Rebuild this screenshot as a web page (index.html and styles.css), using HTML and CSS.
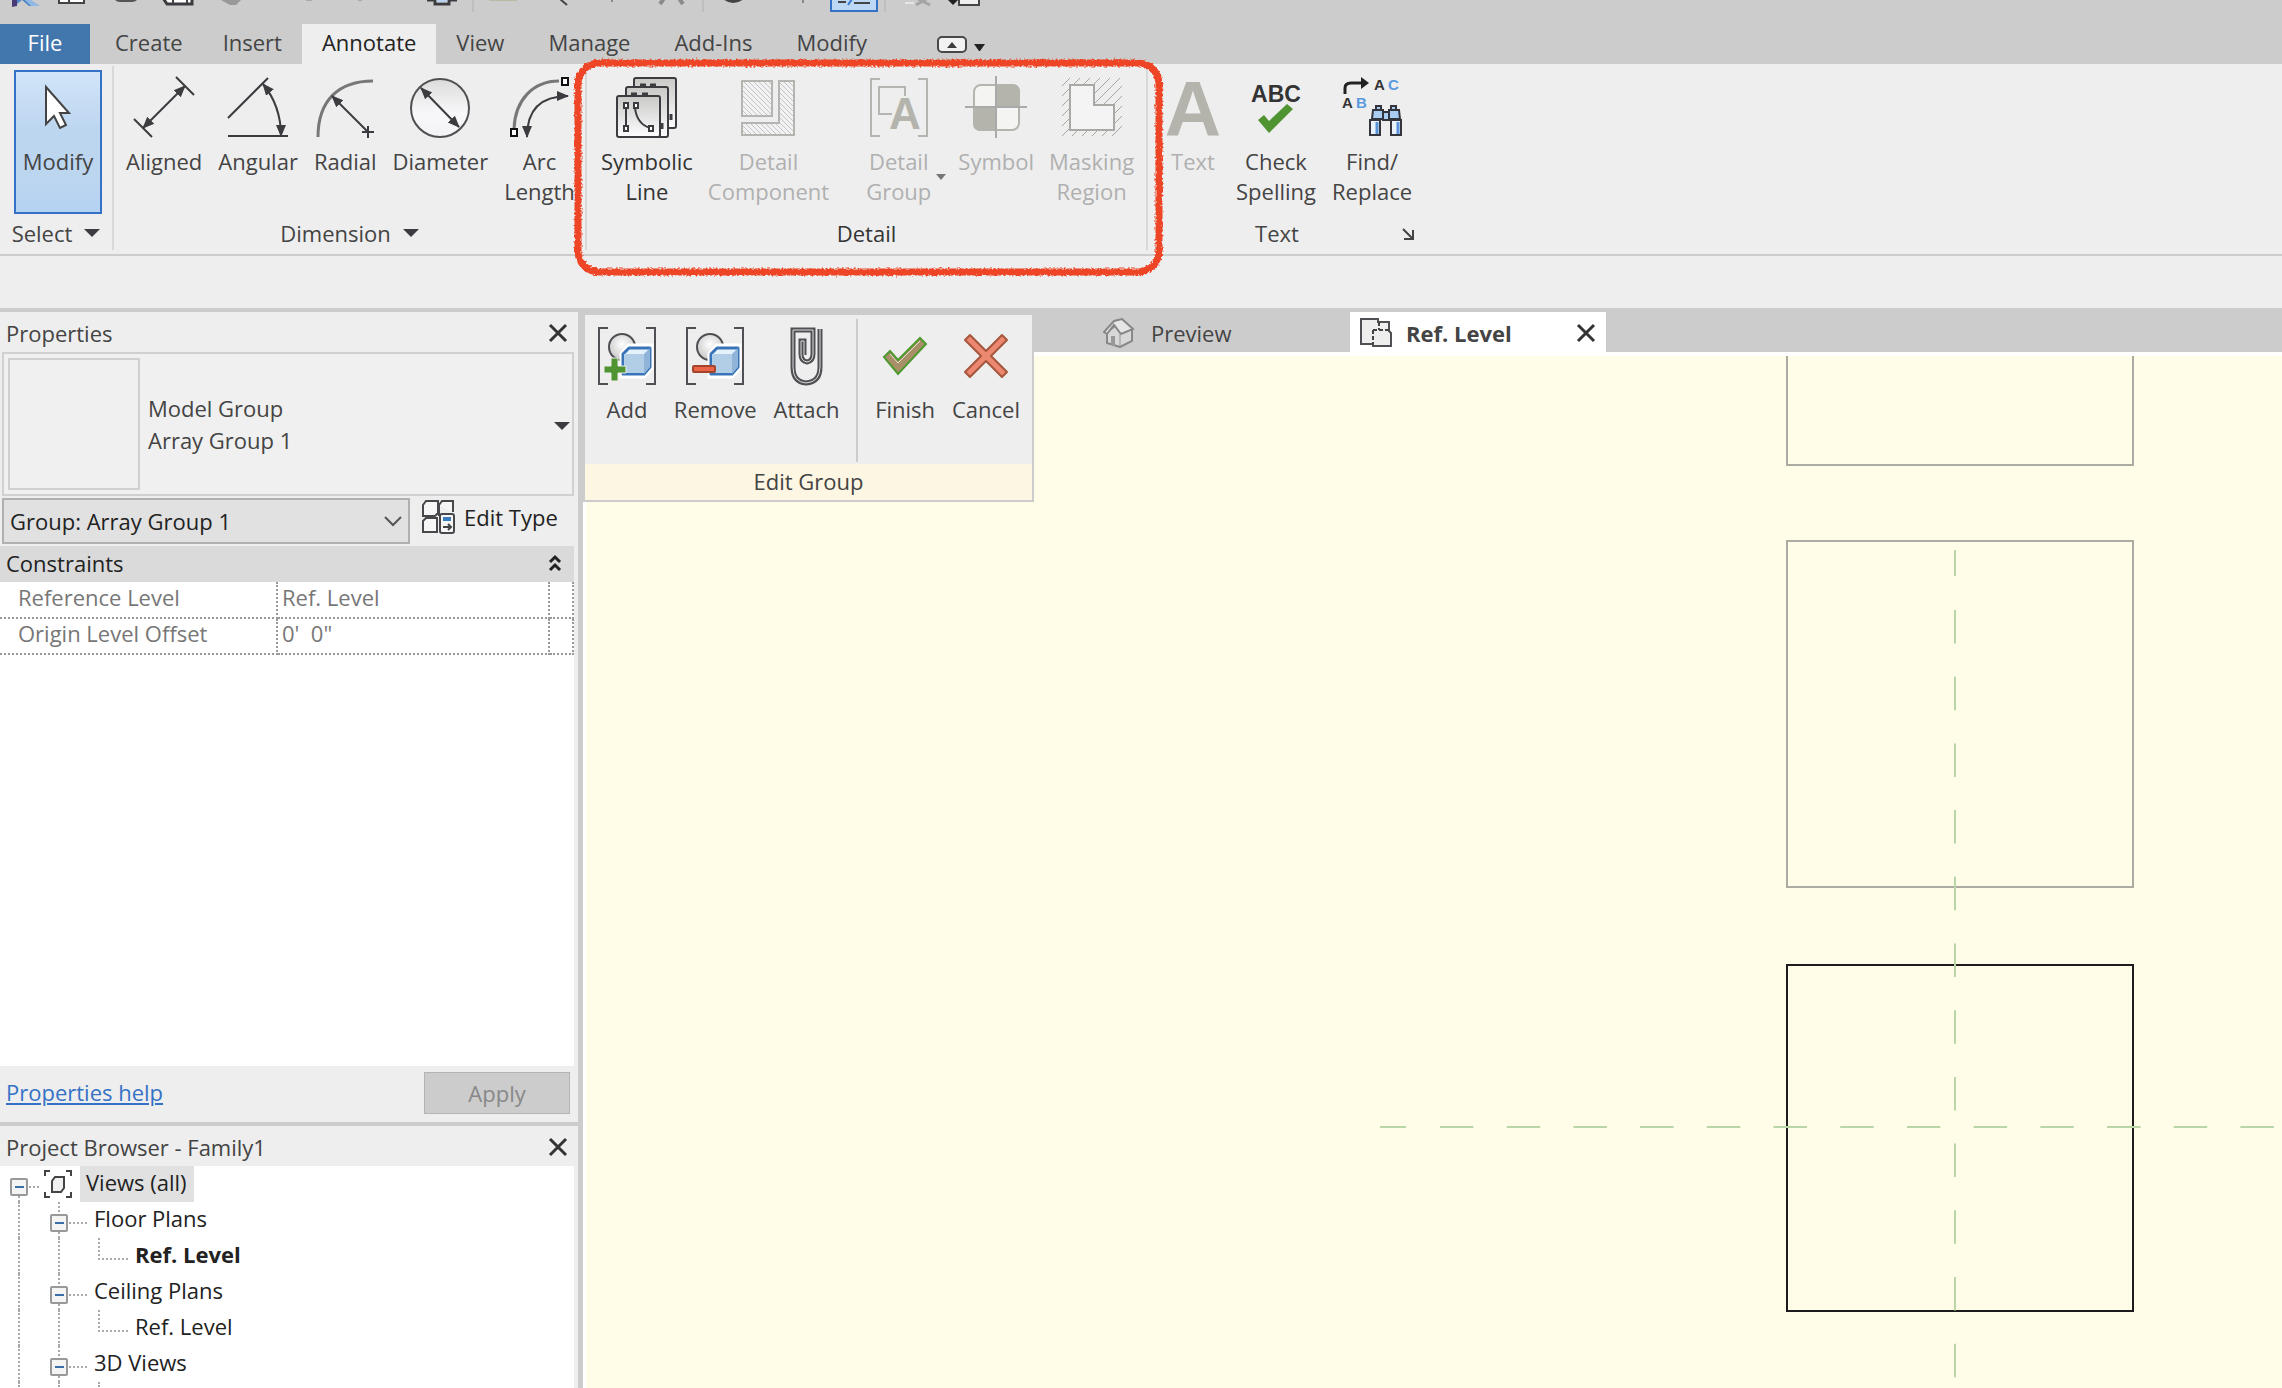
FILE: index.html
```html
<!DOCTYPE html>
<html lang="en">
<head>
<meta charset="utf-8">
<meta name="viewport" content="width=device-width, initial-scale=1">
<title>Family1 - Ref. Level</title>
<link rel="stylesheet" href="styles.css">
</head>
<body>
<svg class="defs" width="0" height="0" aria-hidden="true">
  <defs>
    <linearGradient id="sheet" x1="0" y1="0" x2="0" y2="1"><stop offset="0" stop-color="#c9c9c7"/><stop offset="1" stop-color="#fdfdff"/></linearGradient>
    <linearGradient id="glass" x1="0" y1="0" x2="0" y2="1"><stop offset="0" stop-color="#dcdcdc"/><stop offset=".6" stop-color="#f8f8fa"/><stop offset="1" stop-color="#f3f3f6"/></linearGradient>
    <radialGradient id="ball" cx=".5" cy=".4" r=".6"><stop offset="0" stop-color="#fff"/><stop offset="1" stop-color="#c8c8c8"/></radialGradient>
    <pattern id="hatch" width="5" height="5" patternUnits="userSpaceOnUse"><rect width="5" height="5" fill="#f2f2f2"/><path d="M0 0l5 5" stroke="#c4c4c4" stroke-width="1"/></pattern>
    <marker id="head" viewBox="0 0 12 12" refX="11" refY="6" markerWidth="12" markerHeight="12" markerUnits="userSpaceOnUse" orient="auto-start-reverse"><path d="M0 1l12 5-12 5z" fill="#3c3c40"/></marker>
    <filter id="rough" x="-5%" y="-5%" width="110%" height="110%"><feTurbulence type="fractalNoise" baseFrequency=".5" numOctaves="2" seed="4"/><feDisplacementMap in="SourceGraphic" scale="5" xChannelSelector="R" yChannelSelector="G"/></filter>
    <symbol id="close" viewBox="0 0 20 20"><path d="M2 2l16 16M18 2L2 18" stroke="#333" stroke-width="3" fill="none"/></symbol>
    <symbol id="group" viewBox="0 0 60 60">
      <path d="M11 2H2v56h9M49 2h9v56h-9" fill="none" stroke="#505054" stroke-width="2"/>
      <circle cx="25" cy="21" r="13" fill="url(#ball)" stroke="#505054" stroke-width="2"/>
      <path d="M25 28l7-8h22v22l-7 8H25z" fill="#fff" stroke="#fff" stroke-width="5"/>
      <path d="M26 28l6-6h21v19l-6 7H26z" fill="#e6f2fa" stroke="#3a74b8" stroke-width="3" stroke-linejoin="round"/>
      <path d="M27 28h20v19H27z" fill="#b2cde6"/><path d="M47 28l6-6v19l-6 7z" fill="#8fb4d8"/>
    </symbol>
    <symbol id="minus-box" viewBox="0 0 18 18"><rect x="1" y="1" width="16" height="16" rx="1" fill="#f4f4f4" stroke="#999" stroke-width="2"/><path d="M5 9h9" stroke="#3a6ea8" stroke-width="2"/></symbol>
  </defs>
</svg>

<header class="titlebar" aria-label="Quick access toolbar">
  <svg width="1000" height="24" viewBox="0 0 1000 24" aria-hidden="true">
    <path d="M12 0h5v6l-5 1z" fill="#4a3a78"/><path d="M17 0h12l10 6h-10L22 0l-5 4z" fill="#4f86c6"/><path d="M25 0h6l9 6h-9z" fill="#8fb8e4"/>
    <path d="M59 -4h25v7H59z" fill="#fff" stroke="#444" stroke-width="2"/><path d="M69-2v4" stroke="#444" stroke-width="2"/>
    <path d="M115 0h22q-2 2-5 2h-12q-3 0-5-2z" fill="#555"/>
    <path d="M163 -2l4 6h25v-6z" fill="#fff" stroke="#3c3c40" stroke-width="3"/><path d="M173-1v4M187-1v4" stroke="#444" stroke-width="2"/>
    <path d="M221 0h20l-5 5h-6z" fill="#999"/>
    <path d="M306 0h6M358 0h4" stroke="#888" stroke-width="1"/>
    <path d="M427 0h8v4h14V0h8" fill="#fff" stroke="#3c3c40" stroke-width="3"/><path d="M437 0h10v2h-10z" fill="#b9d2ee"/>
    <path d="M473 0v12M703 0v12M885 0v12" stroke="#b2b2b2" stroke-width="1"/>
    <path d="M489 0h28" stroke="#a5a77c" stroke-width="1"/>
    <path d="M560-1l7 6" stroke="#444" stroke-width="2"/><path d="M612 0v2M803 0v3" stroke="#888" stroke-width="2"/>
    <path d="M660 4l5-7M683 4l-5-7" stroke="#8c8c8c" stroke-width="4"/>
    <path d="M723-3q10 9 21 0" stroke="#444" stroke-width="3" fill="#fff"/>
    <path d="M831-3h46v14h-46z" fill="#bcd8f4" stroke="#3572c6" stroke-width="2"/><path d="M838 2h8M854 3h16" stroke="#444" stroke-width="2"/><path d="M848 5l4-6" stroke="#3a78c8" stroke-width="2"/>
    <path d="M905 3h9" stroke="#e4e4e4" stroke-width="2"/><path d="M916 5l12-7M918-1l12 6" stroke="#a5a5a5" stroke-width="3"/>
    <path d="M948 0h10l-5 5z" fill="#222"/><path d="M959-3h20v8h-20z" fill="#eee" stroke="#444" stroke-width="2"/>
  </svg>
</header>

<nav class="tabs" aria-label="Ribbon tabs">
  <button class="tab file">File</button>
  <button class="tab">Create</button>
  <button class="tab">Insert</button>
  <button class="tab active">Annotate</button>
  <button class="tab">View</button>
  <button class="tab">Manage</button>
  <button class="tab">Add-Ins</button>
  <button class="tab">Modify</button>
  <button class="collapse" aria-label="Minimize ribbon">
    <svg width="48" height="20" viewBox="0 0 48 20"><rect x="1" y="3" width="28" height="15" rx="4" fill="#f2f2f2" stroke="#48484c" stroke-width="2"/><path d="M10 14h10l-5-6z" fill="#3c3c40"/><path d="M37 10h11l-5 7h-1z" fill="#222"/></svg>
  </button>
</nav>

<section class="ribbon" aria-label="Annotate">
  <div class="panel select-panel">
    <div class="tools">
      <button class="tool selected"><svg width="60" height="62" viewBox="0 0 60 62"><path d="M18 11v37l8-8 6 12 6-3-6-12h9z" fill="#fff" stroke="#444" stroke-width="2"/></svg><span>Modify</span></button>
    </div>
    <div class="panel-title">Select <i class="caret"></i></div>
  </div>
  <div class="panel dimension-panel">
    <div class="tools">
      <button class="tool"><svg width="60" height="62" viewBox="0 0 60 62"><g fill="none" stroke="#3c3c40" stroke-width="2"><path d="M42 1l18 18M0 43l18 18"/><path d="M9 52L51 10" marker-start="url(#head)" marker-end="url(#head)"/></g></svg><span>Aligned</span></button>
      <button class="tool"><svg width="60" height="62" viewBox="0 0 60 62"><g fill="none" stroke="#3c3c40" stroke-width="2"><path d="M0 60h60M0 42L40 2"/><path d="M35 8q18 22 18 52" marker-start="url(#head)" marker-end="url(#head)"/></g></svg><span>Angular</span></button>
      <button class="tool"><svg width="60" height="62" viewBox="0 0 60 62"><g fill="none" stroke="#3c3c40" stroke-width="2"><path d="M3 61C3 24 24 5 58 5" stroke="#777" stroke-width="3"/><path d="M53 56L17 20" marker-end="url(#head)"/><path d="M53 50v12M47 56h12"/></g></svg><span>Radial</span></button>
      <button class="tool"><svg width="62" height="62" viewBox="0 0 62 62"><circle cx="31" cy="32" r="29" fill="url(#glass)" stroke="#505054" stroke-width="2"/><path d="M12 12l38 39" stroke="#3c3c40" stroke-width="2" marker-start="url(#head)" marker-end="url(#head)"/></svg><span>Diameter</span></button>
      <button class="tool"><svg width="60" height="62" viewBox="0 0 60 62"><g fill="none" stroke="#3c3c40" stroke-width="2"><path d="M5 53C6 24 24 5 50 5" stroke="#777" stroke-width="3"/><path d="M18 61C18 34 32 20 59 20" marker-start="url(#head)" marker-end="url(#head)"/><path d="M53 2h6v7h-6zM2 53h6v7H2z" fill="#fff" stroke="#111"/></g></svg><span>Arc<br>Length</span></button>
    </div>
    <div class="panel-title">Dimension <i class="caret"></i></div>
  </div>
  <div class="panel detail-panel">
    <div class="tools">
      <button class="tool dark"><svg width="62" height="62" viewBox="0 0 62 62"><g stroke="#3c3c40" stroke-width="2" fill="url(#sheet)"><rect x="18" y="2" width="42" height="50" rx="2"/><rect x="10" y="11" width="42" height="50" rx="2"/><rect x="1" y="20" width="43" height="41" rx="2"/><path d="M10 32v18M19 32q2 16 15 20" fill="none"/><path d="M8 27h4v5H8zM18 27h4v5h-4zM8 50h4v5H8zM33 50h4v5h-4z" fill="#fff"/></g><path d="M24 9h6M34 9h6M15 18h6M26 18h6M55 38v6M46 47v6" stroke="#3c3c40" stroke-width="3"/></svg><span>Symbolic<br>Line</span></button>
      <button class="tool" disabled><svg width="60" height="62" viewBox="0 0 60 62"><g fill="url(#hatch)" stroke="#b4b4b0" stroke-width="2"><path d="M4 5h30v35H4z"/><path d="M41 5h15v61H4V48h37z" visibility="hidden"/><path d="M41 5h15v54H4V47h37z"/></g></svg><span>Detail<br>Component</span></button>
      <button class="tool split" disabled><svg width="60" height="62" viewBox="0 0 60 62"><g fill="none" stroke="#b4b4b0" stroke-width="2"><path d="M11 3H2v57h9M49 3h9v57h-9M23 38H10V11h26v9"/></g><text x="36" y="53" class="glyph" font-size="44">A</text></svg><span>Detail<br>Group</span><i class="caret small"></i></button>
      <button class="tool" disabled><svg width="62" height="62" viewBox="0 0 62 62"><rect x="9" y="9" width="45" height="45" rx="7" fill="#f4f4f2" stroke="#b4b4b0" stroke-width="2"/><path d="M31 8h16q8 0 8 8v15H31zM31 31v24H16q-8 0-8-8V31z" fill="#b4b4ac"/><path d="M31 0v62M0 31h62" stroke="#aaa" stroke-width="2"/></svg><span>Symbol</span></button>
      <button class="tool" disabled><svg width="60" height="62" viewBox="0 0 60 62"><path d="M0 10l8-8M0 20L18 2M0 30L28 2M0 40L38 2M0 50L48 2M0 60L58 2M10 60L60 10M20 60l40-40M30 60l30-30M40 60l20-20M50 60l10-10" stroke="#a6a6a2" stroke-width="1"/><path d="M8 9h24v20h20v25H8z" fill="#f4f4f4" stroke="#a8a8a4" stroke-width="2"/></svg><span>Masking<br>Region</span></button>
    </div>
    <div class="panel-title strong">Detail</div>
  </div>
  <div class="panel text-panel">
    <div class="tools">
      <button class="tool" disabled><svg width="54" height="62" viewBox="0 0 54 62"><text x="27" y="60" class="glyph" font-size="78">A</text></svg><span>Text</span></button>
      <button class="tool"><svg width="60" height="62" viewBox="0 0 60 62"><text x="30" y="26" class="abc">ABC</text><path d="M12 44l6-5 5 6 18-17 6 5-24 24z" fill="#4f9430"/></svg><span>Check<br>Spelling</span></button>
      <button class="tool"><svg width="60" height="62" viewBox="0 0 60 62"><path d="M3 18V12q0-5 6-5h12" fill="none" stroke="#222" stroke-width="3"/><path d="M19 1l8 6-8 6z" fill="#222"/><text x="32" y="14" class="mini">A</text><text x="46" y="14" class="mini blue">C</text><text x="0" y="32" class="mini">A</text><text x="14" y="32" class="mini blue">B</text><g stroke="#34343c" stroke-width="2" fill="#a8ccf2"><path d="M34 30h5v4h-5zM49 30h5v4h-5z"/><path d="M31 34h10v9H30zM47 34h10l1 9H47z"/><rect x="41" y="36" width="6" height="8"/><path d="M28 44h10v15H28zM49 44h10v15H49z" fill="#e8f2fc"/></g><path d="M35 46v12M56 46v12" stroke="#5a93d8" stroke-width="3"/></svg><span>Find/<br>Replace</span></button>
    </div>
    <div class="panel-title launcher-title">Text
      <button class="launcher" aria-label="Text settings"><svg width="12" height="12" viewBox="0 0 12 12"><path d="M1 1l9 9M11 2v9H2" fill="none" stroke="#444" stroke-width="2"/></svg></button>
    </div>
  </div>
  <svg class="markup" width="594" height="224" viewBox="0 0 594 224" aria-hidden="true"><rect x="6" y="6" width="581" height="209" rx="21" fill="none" stroke="#ee4426" stroke-width="7" filter="url(#rough)"/></svg>
</section>

<div class="options-bar"></div>

<div class="workspace">
  <aside class="side">
    <section class="properties">
      <header class="side-head"><h2>Properties</h2><button class="icon-button" aria-label="Close Properties"><svg width="20" height="20"><use href="#close"/></svg></button></header>
      <button class="type-selector"><span class="thumb"></span><span class="type-name">Model Group<br>Array Group 1</span><i class="caret"></i></button>
      <div class="filter-row">
        <div class="select-wrap">
          <select class="filter" aria-label="Filter"><option>Group: Array Group 1</option></select>
          <svg class="chevron" width="18" height="12" viewBox="0 0 18 12"><path d="M1 1l8 8 8-8" fill="none" stroke="#555" stroke-width="2"/></svg>
        </div>
        <button class="edit-type"><svg width="34" height="34" viewBox="0 0 34 34"><g fill="#f6f6f6" stroke="#48484c" stroke-width="2"><path d="M1 5l3-4h12v12l-3 3H1zM17 5l3-4h11v11M17 5v11M1 21l3-3h11v14H1z"/><rect x="18" y="14" width="14" height="19" rx="2"/></g><path d="M21 17h8v4h-8z" fill="#3a78c0"/><path d="M21 27h7M26 24l3 3-3 3" stroke="#444" stroke-width="2" fill="none"/></svg>Edit Type</button>
      </div>
      <div class="category"><span>Constraints</span><button class="icon-button" aria-label="Collapse Constraints"><svg width="14" height="18" viewBox="0 0 14 18"><path d="M2 8l5-5 5 5M2 16l5-5 5 5" fill="none" stroke="#222" stroke-width="3"/></svg></button></div>
      <div class="grid-area">
        <table class="params">
          <tr><th scope="row">Reference Level</th><td>Ref. Level</td><td class="assoc"></td></tr>
          <tr><th scope="row">Origin Level Offset</th><td>0'&nbsp; 0"</td><td class="assoc"></td></tr>
        </table>
      </div>
      <footer class="side-foot"><a href="#help">Properties help</a><button class="apply" disabled>Apply</button></footer>
    </section>
    <section class="browser">
      <header class="side-head"><h2>Project Browser - Family1</h2><button class="icon-button" aria-label="Close Project Browser"><svg width="20" height="20"><use href="#close"/></svg></button></header>
      <ul class="tree">
        <li class="node"><button class="expander root" aria-label="Collapse Views"><svg width="40" height="36"><path class="dots" d="M19 30v6M29 21h12"/><use href="#minus-box" x="10" y="12" width="18" height="18"/></svg></button><svg width="40" height="36" viewBox="0 0 40 36"><path d="M5 10V5h5M26 5h5v5M31 26v5h-5M10 31H5v-5" fill="none" stroke="#444" stroke-width="2"/><path d="M12 15l3-4h9v11l-3 4h-9z" fill="#f0f0f0" stroke="#444" stroke-width="2"/></svg><span class="name current">Views (all)</span></li>
        <li class="node"><i class="rail"></i><button class="expander" aria-label="Collapse Floor Plans"><svg width="54" height="36"><path class="dots" d="M19 0v12M19 30v6M29 21h20"/><use href="#minus-box" x="10" y="12" width="18" height="18"/></svg></button><span class="name">Floor Plans</span></li>
        <li class="node"><i class="rail"></i><i class="rail"></i><svg width="55" height="36"><path class="dots" d="M19 0v21h30"/></svg><span class="name open">Ref. Level</span></li>
        <li class="node"><i class="rail"></i><button class="expander" aria-label="Collapse Ceiling Plans"><svg width="54" height="36"><path class="dots" d="M19 0v12M19 30v6M29 21h20"/><use href="#minus-box" x="10" y="12" width="18" height="18"/></svg></button><span class="name">Ceiling Plans</span></li>
        <li class="node"><i class="rail"></i><i class="rail"></i><svg width="55" height="36"><path class="dots" d="M19 0v21h30"/></svg><span class="name">Ref. Level</span></li>
        <li class="node"><i class="rail"></i><button class="expander" aria-label="Collapse 3D Views"><svg width="54" height="36"><path class="dots" d="M19 0v12M19 30v6M29 21h20"/><use href="#minus-box" x="10" y="12" width="18" height="18"/></svg></button><span class="name">3D Views</span></li>
        <li class="node"><i class="rail"></i><i class="rail"></i><i class="rail"></i></li>
      </ul>
    </section>
  </aside>

  <main class="view">
    <nav class="doc-tabs" aria-label="Open views">
      <button class="doc-tab"><svg width="32" height="30" viewBox="0 0 32 30"><path d="M4 14v11l13 4 12-6V12L19 3z" fill="#d8d8d8" stroke="#888" stroke-width="2"/><path d="M1 14L11 3l8-2 11 10-12 5-7-9-7 9z" fill="#e6e6e6" stroke="#888" stroke-width="2"/><path d="M8 27v-9h4v10" fill="#999"/><path d="M17 16v12" stroke="#999" stroke-width="1"/></svg><span>Preview</span></button>
      <div class="doc-tab active"><svg width="34" height="30" viewBox="0 0 34 30"><path d="M2 1h17v3h11v9l2 2v13H14v-2H2z" fill="#eee" stroke="#505054" stroke-width="2"/><path d="M20 4v8M14 12h16M14 12v14" stroke="#444" stroke-width="2" stroke-dasharray="4 2"/></svg><span>Ref. Level</span><button class="icon-button" aria-label="Close Ref. Level"><svg width="20" height="20"><use href="#close"/></svg></button></div>
    </nav>
    <div class="canvas">
      <svg class="drawing" width="100%" height="100%" role="img" aria-label="Floor plan of the array group">
        <g fill="none" stroke="#acaca2" stroke-width="2"><path d="M1201 0v109h346V0"/><rect x="1201" y="185" width="346" height="346"/></g>
        <rect x="1201" y="609" width="346" height="346" fill="none" stroke="#1c1c1c" stroke-width="2"/>
        <g stroke="#b9d6a8" stroke-width="2"><path d="M1369 194v26"/><path d="M1369 254v1134" stroke-dasharray="33.5 33.2"/><path d="M794 771h26"/><path d="M854 771h2000" stroke-dasharray="33.5 33.2"/></g>
      </svg>
    </div>
    <section class="edit-group" aria-label="Edit Group">
      <div class="edit-tools">
        <button class="tool"><svg width="60" height="60"><use href="#group"/><path d="M14 32h7v8h8v7h-8v8h-7v-8H7v-7h7z" fill="#4f9430" stroke="#eee" stroke-width="1"/></svg><span>Add</span></button>
        <button class="tool"><svg width="60" height="60"><use href="#group"/><rect x="8" y="40" width="22" height="6" rx="1" fill="#ea6448" stroke="#a5442c" stroke-width="2"/></svg><span>Remove</span></button>
        <button class="tool"><svg width="60" height="60" viewBox="0 0 60 60"><g fill="none"><path d="M43 3v38q0 15-14 16-13-1-13-16V4h20v24q0 7-6 8-6-1-6-8V15h3v14" stroke="#505054" stroke-width="5"/><path d="M43 3v38q0 15-14 16-13-1-13-16V4h20v24q0 7-6 8-6-1-6-8V15h3v14" stroke="#ddd" stroke-width="1"/></g></svg><span>Attach</span></button>
        <i class="divider"></i>
        <button class="tool"><svg width="60" height="60" viewBox="0 0 60 60"><path d="M9 31l6-6 8 9 22-22 6 6-28 30z" fill="#a98f68" stroke="#4f9a30" stroke-width="2"/><path d="M15 28l8 9 22-22" fill="none" stroke="#e4e0d0" stroke-width="1"/></svg><span>Finish</span></button>
        <button class="tool"><svg width="60" height="60" viewBox="0 0 60 60"><path d="M14 9l16 16L46 9l5 5-16 16 16 16-5 5-16-16-16 16-5-5 16-16L9 14z" fill="#ec8770" stroke="#a5563c" stroke-width="2" stroke-linejoin="round"/></svg><span>Cancel</span></button>
      </div>
      <div class="edit-title">Edit Group</div>
    </section>
  </main>
</div>
</body>
</html>
```
FILE: styles.css
```css
* { box-sizing: border-box; }
html, body { height: 100%; }
body {
  margin: 0;
  display: flex;
  flex-direction: column;
  overflow: hidden;
  background: #eee;
  color: #444;
  font: 22px/30px "Open Sans", "Noto Sans", sans-serif;
}
button, select { font: inherit; color: inherit; border: 0; background: none; padding: 0; margin: 0; }
svg { display: block; flex: none; }
.defs { position: absolute; }
h2 { margin: 0; font: inherit; }

.titlebar { height: 24px; background: #ccc; overflow: hidden; flex: none; }

.tabs { display: flex; align-items: stretch; height: 40px; background: #ccc; flex: none; padding-right: 20px; }
.tab { padding: 0 20px 3px; line-height: 37px; white-space: nowrap; }
.tab.file { width: 90px; margin-right: 5px; background: #4277ae; color: #fff; }
.tab.active { background: #eee; color: #222; }
.tab.active ~ .tab { padding-right: 24px; }
.collapse { margin-left: 46px; }

.ribbon { position: relative; display: flex; height: 192px; padding-top: 2px; border-bottom: 2px solid #ccc; flex: none; }
.panel { display: flex; flex-direction: column; height: 184px; border-right: 2px solid #d8d8d8; }
.panel:last-of-type { border-right: 0; }
.tools { display: flex; gap: 16px; padding: 4px 10px 0 12px; height: 152px; }
.select-panel { width: 114px; }
.select-panel .tools { padding-left: 14px; }
.dimension-panel { width: 473px; }
.detail-panel { width: 561px; }
.detail-panel .tools { padding-left: 14px; gap: 15px; }
.text-panel .tools { padding-left: 18px; gap: 16px; }
.tool { position: relative; display: flex; flex-direction: column; align-items: center; height: 144px; padding-top: 6px; text-align: center; white-space: nowrap; flex: none; }
.tool svg { margin-bottom: 8px; overflow: visible; }
.tool.selected { width: 88px; padding-top: 4px; border: 2px solid #3572c6; background: linear-gradient(#d2e5f8, #bdd6f0 40%, #bdd6f0 75%, #b4d2f2); }
.tool.dark { color: #333; }
.tool:disabled { color: #b0b0b0; }
.tool.split { padding-left: 22px; padding-right: 12px; }
.caret { display: inline-block; border: 8px solid transparent; border-top-color: #3c3c40; border-bottom: 0; flex: none; vertical-align: middle; }
.caret.small { position: absolute; right: -3px; top: 104px; border-width: 6px 5px 0; border-top-color: #777; }
.panel-title { display: flex; justify-content: center; align-items: center; gap: 12px; }
.panel-title.strong { color: #333; }
.launcher-title { position: relative; padding-right: 16px; }
.launcher { position: absolute; right: 8px; top: 10px; }
.glyph { font-family: "Liberation Sans", sans-serif; font-weight: 700; fill: #b4b4ac; text-anchor: middle; }
.abc { font: 700 23px "Liberation Sans", sans-serif; fill: #333; text-anchor: middle; }
.mini { font: 700 15px "Liberation Sans", sans-serif; fill: #333; }
.mini.blue { fill: #5a9ade; }
.markup { position: absolute; left: 572px; top: -7px; }

.options-bar { height: 52px; flex: none; }

.workspace { display: flex; flex: 1; min-height: 0; border-top: 4px solid #ccc; }
.side { width: 583px; flex: none; display: flex; flex-direction: column; border-right: 5px solid #ccc; }
.properties { display: flex; flex-direction: column; height: 814px; border-bottom: 4px solid #ccc; flex: none; }
.side-head { display: flex; justify-content: space-between; align-items: center; height: 40px; padding: 2px 10px 0 6px; }
.icon-button { display: flex; align-items: center; }
.type-selector { display: flex; align-items: center; height: 144px; margin: 0 4px 0 2px; padding: 4px 2px 4px 4px; border: 2px solid #d0d0d0; background: #f0f0f0; text-align: left; line-height: 32px; flex: none; }
.thumb { width: 132px; height: 132px; border: 2px solid #d0d0d0; margin-right: 8px; }
.type-name { flex: 1; }
.type-selector .caret { margin-top: 4px; }
.filter-row { display: flex; align-items: center; height: 50px; gap: 12px; padding-left: 2px; }
.select-wrap { position: relative; width: 408px; }
.filter { appearance: none; width: 100%; height: 46px; padding: 0 8px 0 6px; border: 2px solid #b0b0b0; background: #e1e1e1; color: #222; }
.chevron { position: absolute; right: 8px; top: 18px; }
.edit-type { display: flex; align-items: center; gap: 8px; color: #222; padding-bottom: 8px; }
.category { display: flex; justify-content: space-between; align-items: center; height: 36px; margin-right: 4px; padding: 0 12px 2px 6px; background: #dadada; color: #222; }
.grid-area { flex: 1; margin-right: 4px; background: #fff; }
.params { width: 100%; table-layout: fixed; border-collapse: collapse; color: #777; }
.params th, .params td { height: 36px; padding: 0 4px 5px; border: 2px dotted #999; border-top: 0; font-weight: 400; text-align: left; line-height: 29px; }
.params th { width: 277px; padding-left: 18px; border-left: 0; }
.params .assoc { width: 24px; padding: 0; }
.side-foot { display: flex; justify-content: space-between; align-items: center; height: 56px; padding: 0 8px 2px 6px; }
.side-foot a { color: #3572c6; padding-bottom: 3px; }
.apply { width: 146px; height: 42px; border: 1px solid #b4b4b4; background: #ccc; color: #888; }
.browser { flex: 1; min-height: 0; display: flex; flex-direction: column; }
.tree { list-style: none; flex: 1; min-height: 0; margin: 0 4px 0 0; padding: 0; overflow: hidden; background: #fff; color: #222; }
.node { display: flex; height: 36px; }
.expander { display: block; }
.rail { width: 40px; padding-left: 18px; }
.rail::before { content: ""; display: block; height: 100%; border-left: 2px dotted #aaa; }
.dots { fill: none; stroke: #aaa; stroke-width: 2; stroke-dasharray: 2 2; }
.name { line-height: 33px; height: 36px; white-space: nowrap; }
.name.current { padding: 0 7px 0 6px; background: #e1e1e1; }
.name.open { font-weight: 700; }

.view { position: relative; flex: 1; min-width: 0; display: flex; flex-direction: column; }
.doc-tabs { display: flex; height: 40px; background: #ccc; padding-left: 520px; flex: none; }
.doc-tab { display: flex; align-items: center; gap: 16px; width: 247px; padding: 1px 0 0; }
.doc-tab.active { width: 256px; padding: 1px 10px 0 9px; gap: 13px; background: #fff; font-weight: 700; }
.doc-tab.active .icon-button { margin-left: auto; }
.canvas { flex: 1; min-height: 0; border: solid #fff; border-width: 4px 0 0 3px; background: #fffde8; overflow: hidden; }
.edit-group { position: absolute; left: 0; top: 1px; width: 451px; border: 2px solid #ccc; background: #eee; }
.edit-tools { display: flex; height: 149px; padding: 4px 12px 0 12px; justify-content: space-between; }
.edit-tools .tool { padding-top: 7px; }
.divider { width: 2px; background: #ccc; margin-bottom: 2px; }
.edit-title { height: 36px; line-height: 34px; text-align: center; background: #fdf6e2; }
```
